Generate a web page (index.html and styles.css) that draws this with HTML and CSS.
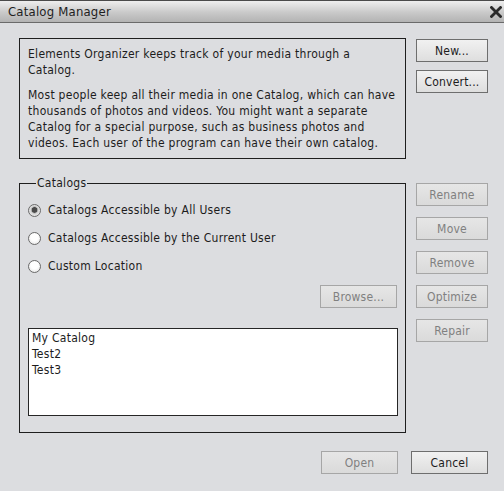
FILE: index.html
```html
<!DOCTYPE html>
<html>
<head>
<meta charset="utf-8">
<link rel="stylesheet" href="styles.css">
</head>
<body>
<div class="window">
  <div class="titlebar">
    <span class="title">Catalog Manager</span>
    <svg class="close" width="12" height="12" viewBox="0 0 12 12"><path d="M1.5 1.5 L10.5 10.5 M10.5 1.5 L1.5 10.5" stroke="#2b2b2b" stroke-width="2.8" stroke-linecap="square"/></svg>
  </div>
  <div class="main">
    <div class="left">
      <div class="info">
        <p>Elements Organizer keeps track of your media through a<br>Catalog.</p>
        <p>Most people keep all their media in one Catalog, which can have<br>thousands of photos and videos. You might want a separate<br>Catalog for a special purpose, such as business photos and<br>videos. Each user of the program can have their own catalog.</p>
      </div>
      <fieldset class="catalogs">
        <legend>Catalogs</legend>
        <label class="radio-row"><span class="radio checked"></span>Catalogs Accessible by All Users</label>
        <label class="radio-row"><span class="radio"></span>Catalogs Accessible by the Current User</label>
        <label class="radio-row"><span class="radio"></span>Custom Location</label>
        <div class="browse-row"><button class="btn disabled browse">Browse...</button></div>
        <div class="list">
          <div class="item">My Catalog</div>
          <div class="item">Test2</div>
          <div class="item">Test3</div>
        </div>
      </fieldset>
    </div>
    <div class="right">
      <button class="btn">New...</button>
      <button class="btn second">Convert...</button>
      <button class="btn disabled group">Rename</button>
      <button class="btn disabled gap">Move</button>
      <button class="btn disabled gap">Remove</button>
      <button class="btn disabled gap">Optimize</button>
      <button class="btn disabled gap">Repair</button>
    </div>
  </div>
  <div class="footer">
    <button class="btn disabled wide">Open</button>
    <button class="btn wide">Cancel</button>
  </div>
</div>
</body>
</html>
```

FILE: styles.css
```css
* { box-sizing: border-box; }
html, body { margin: 0; padding: 0; }
body {
  font-family: "DejaVu Sans Condensed", "DejaVu Sans", sans-serif;
  font-stretch: condensed;
  font-size: 12px;
  letter-spacing: 0.28px;
  color: #1c1c1c;
  background: #dcdde0;
}
.window {
  width: 504px;
  height: 491px;
  background: #dcdde0;
  overflow: hidden;
}
.titlebar {
  height: 23px;
  border-top: 1px solid #4a4a4a;
  border-bottom: 1px solid #6a6a6a;
  background: linear-gradient(#eeeeee, #c9c9c9 55%, #b3b3b3);
  display: flex;
  align-items: center;
  justify-content: space-between;
  padding: 0 2px 0 8px;
}
.title {
  font-size: 13px;
  color: #1e1e1e;
  letter-spacing: 0.2px;
}
.close { display: block; margin-top: 1px; }
.main {
  display: flex;
  padding: 15px 16px 0 19px;
  gap: 10px;
}
.left { width: 387px; }
.info {
  height: 121px;
  border: 1px solid #1e1e1e;
  padding: 7px 0 0 8px;
  line-height: 16px;
  white-space: nowrap;
}
.info p { margin: 0 0 9px 0; }
.catalogs {
  margin: 16px 0 0 0;
  border: 1px solid #1e1e1e;
  padding: 5px 7px 16px 8px;
  min-inline-size: 0;
}
.catalogs legend {
  padding: 0 1px;
  margin-left: 8px;
  line-height: 16px;
}
.radio-row {
  display: flex;
  align-items: center;
  height: 28px;
  gap: 7px;
}
.radio {
  width: 13px;
  height: 13px;
  border-radius: 50%;
  border: 1px solid #6a6a6a;
  background: radial-gradient(circle at 50% 40%, #ffffff 40%, #dedede);
  display: flex;
  align-items: center;
  justify-content: center;
}
.radio.checked {
  background: radial-gradient(circle at 50% 45%, #4a4a4a 0 2.5px, #a8a8a8 3px, #d8d8d8 4px, #f2f2f2);
}
.browse-row {
  display: flex;
  justify-content: flex-end;
  margin-top: 5px;
  padding-right: 1px;
}
.list {
  margin-top: 20px;
  height: 88px;
  border: 1px solid #262626;
  background: #ffffff;
  padding: 1px 3px;
  line-height: 16px;
}
.right {
  width: 72px;
  display: flex;
  flex-direction: column;
  padding-top: 1px;
}
.btn {
  font-family: inherit;
  font-stretch: condensed;
  font-size: 12px;
  letter-spacing: 0.2px;
  color: #1c1c1c;
  height: 23px;
  width: 72px;
  padding: 0;
  border: 1px solid #6e6e6e;
  background: linear-gradient(#f1f1f1, #dedede);
  border-radius: 0;
}
.btn.disabled {
  color: #808080;
  border-color: #a6a6a6;
  background: linear-gradient(#e6e6e6, #dadada);
}
.btn.second { margin-top: 8px; }
.btn.group { margin-top: 90px; }
.btn.gap { margin-top: 11px; }
.browse { width: 77px; }
.footer {
  display: flex;
  justify-content: flex-end;
  gap: 13px;
  padding: 18px 16px 0 0;
}
.btn.wide { width: 77px; }
```
